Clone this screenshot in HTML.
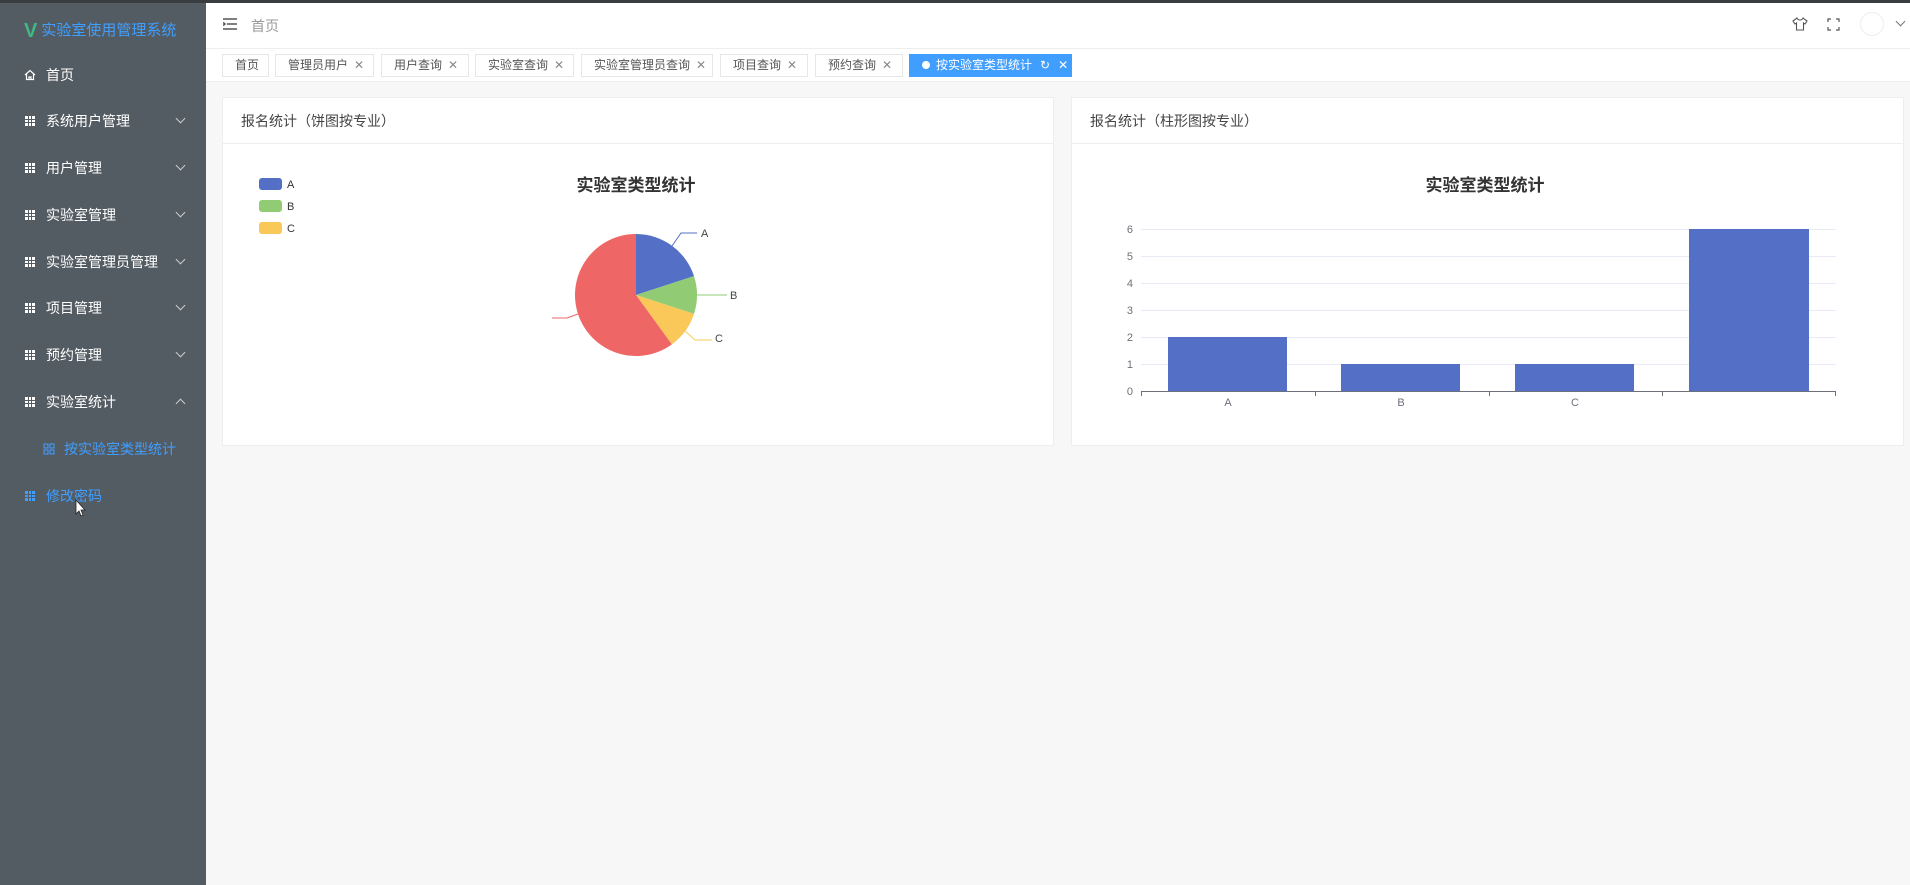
<!DOCTYPE html>
<html><head><meta charset="utf-8"><style>
*{margin:0;padding:0;box-sizing:border-box}
body{width:1910px;height:885px;overflow:hidden;background:#f7f7f7;font-family:"Liberation Sans","Noto Sans CJK SC",sans-serif;position:relative}
.topline{position:absolute;left:0;top:0;width:1910px;height:3px;background:#3a3d40}
.side{position:absolute;left:0;top:3px;width:206px;height:882px;background:#545c63}
.logo{position:absolute;left:24px;top:16px;color:#409eff;font-size:15px}
.logo b{color:#41b883;font-size:20px;font-weight:bold;margin-right:4px;vertical-align:-2px}
.mi{position:absolute;left:0;width:206px;height:20px;color:#fff;font-size:14px;line-height:20px}
.mi .ic{position:absolute;left:25px;top:5px;width:10px;height:10px;background:
linear-gradient(#545c63,#545c63) 3px 0/1px 10px no-repeat,linear-gradient(#545c63,#545c63) 6px 0/1px 10px no-repeat,linear-gradient(#545c63,#545c63) 0 3px/10px 1px no-repeat,linear-gradient(#545c63,#545c63) 0 6px/10px 1px no-repeat,#fff}
.mi .t{position:absolute;left:46px}
.mi .ch{position:absolute;left:177px;top:4px;width:7px;height:7px;border-right:1px solid #ccc;border-bottom:1px solid #ccc;transform:rotate(45deg)}
.mi .up{top:8px;transform:rotate(-135deg)}
.hdr{position:absolute;left:206px;top:3px;width:1704px;height:46px;background:#fff;border-bottom:1px solid #eee}
.tabs{position:absolute;left:206px;top:49px;width:1704px;height:33px;background:#fff;border-bottom:1px solid #eee}
.tab{position:absolute;top:5px;height:23px;border:1px solid #e6e6e6;background:#fff;font-size:12px;color:#555;line-height:21px;padding-left:12px}
.tab i{font-style:normal;color:#888;margin-left:6px}
.card{position:absolute;top:97px;height:349px;background:#fff;border:1px solid #eeeeee}
.card .h{height:46px;border-bottom:1px solid #eee;font-size:14px;color:#444;line-height:46px;padding-left:18px}
</style></head><body>
<div class="topline"></div>
<div class="side">
<div class="logo"><b>V</b>实验室使用管理系统</div>
</div>
<div class="mi" style="top:65px"><svg style="position:absolute;left:24px;top:4px" width="12" height="12" viewBox="0 0 12 12"><path d="M1 6L6 1.5 11 6M2.5 5v5.5h7V5M5 10.5V8h2v2.5" fill="none" stroke="#fff" stroke-width="1.2"/></svg><span class="t">首页</span></div>
<div class="mi" style="top:111px"><span class="ic"></span><span class="t">系统用户管理</span><span class="ch"></span></div>
<div class="mi" style="top:158px"><span class="ic"></span><span class="t">用户管理</span><span class="ch"></span></div>
<div class="mi" style="top:205px"><span class="ic"></span><span class="t">实验室管理</span><span class="ch"></span></div>
<div class="mi" style="top:252px"><span class="ic"></span><span class="t">实验室管理员管理</span><span class="ch"></span></div>
<div class="mi" style="top:298px"><span class="ic"></span><span class="t">项目管理</span><span class="ch"></span></div>
<div class="mi" style="top:345px"><span class="ic"></span><span class="t">预约管理</span><span class="ch"></span></div>
<div class="mi" style="top:392px"><span class="ic"></span><span class="t">实验室统计</span><span class="ch up"></span></div>
<div class="mi" style="top:439px;color:#409eff"><svg style="position:absolute;left:43px;top:4px" width="12" height="12" viewBox="0 0 12 12"><g fill="none" stroke="#409eff"><rect x="1" y="1" width="4" height="4"/><rect x="7" y="1" width="4" height="4"/><rect x="1" y="7" width="4" height="4"/><rect x="7" y="7" width="4" height="4"/></g></svg><span class="t" style="left:64px">按实验室类型统计</span></div>
<div class="mi" style="top:486px;color:#409eff"><span class="ic" style="background:linear-gradient(#545c63,#545c63) 3px 0/1px 10px no-repeat,linear-gradient(#545c63,#545c63) 6px 0/1px 10px no-repeat,linear-gradient(#545c63,#545c63) 0 3px/10px 1px no-repeat,linear-gradient(#545c63,#545c63) 0 6px/10px 1px no-repeat,#409eff"></span><span class="t">修改密码</span></div>

<div class="hdr">
<svg style="position:absolute;left:17px;top:15px" width="14" height="12" viewBox="0 0 14 12"><path d="M0 1h14M4 6h10M0 11h14M0 4.5l2 1.5-2 1.5" stroke="#555" stroke-width="1.5" fill="none"/></svg>
<span style="position:absolute;left:45px;top:13px;font-size:14px;color:#999">首页</span>
<svg style="position:absolute;left:1586px;top:14px" width="16" height="14" viewBox="0 0 16 14"><path d="M5 1L1 4l2 3 1.5-1V13h7V6L13 7l2-3-4-3c-.5 1.5-1.5 2-3 2S5.5 2.5 5 1z" fill="none" stroke="#555" stroke-width="1.1"/></svg>
<svg style="position:absolute;left:1621px;top:15px" width="13" height="13" viewBox="0 0 13 13"><path d="M1 4V1h3M9 1h3v3M12 9v3H9M4 12H1V9" fill="none" stroke="#555" stroke-width="1.2"/></svg>
<div style="position:absolute;left:1654px;top:9px;width:24px;height:24px;border-radius:50%;border:1px solid #eee"></div>
<div style="position:absolute;left:1691px;top:15px;width:7px;height:7px;border-right:1px solid #777;border-bottom:1px solid #777;transform:rotate(45deg)"></div>
</div>
<div class="tabs">
<div class="tab" style="left:16px;width:47px">首页</div>
<div class="tab" style="left:69px;width:99px">管理员用户<i>✕</i></div>
<div class="tab" style="left:175px;width:88px">用户查询<i>✕</i></div>
<div class="tab" style="left:269px;width:99px">实验室查询<i>✕</i></div>
<div class="tab" style="left:375px;width:132px">实验室管理员查询<i>✕</i></div>
<div class="tab" style="left:514px;width:88px">项目查询<i>✕</i></div>
<div class="tab" style="left:609px;width:88px">预约查询<i>✕</i></div>
<div class="tab" style="left:703px;width:163px;background:#409eff;border-color:#409eff;color:#fff;padding-left:12px"><span style="display:inline-block;width:8px;height:8px;border-radius:50%;background:#fff;margin-right:6px;vertical-align:0"></span>按实验室类型统计<i style="color:#fff;margin-left:8px">↻</i><i style="color:#fff;margin-left:8px">✕</i></div>
</div>

<div class="card" style="left:222px;width:832px"><div class="h">报名统计（饼图按专业）</div></div>
<div class="card" style="left:1071px;width:833px"><div class="h">报名统计（柱形图按专业）</div></div>

<svg style="position:absolute;left:0;top:0" width="1910" height="885">
<g font-family="Liberation Sans, Noto Sans CJK SC, sans-serif">
<text x="636" y="191" font-size="17" font-weight="bold" fill="#333" text-anchor="middle">实验室类型统计</text>
<rect x="259" y="178" width="23" height="12" rx="3" fill="#5470c6"/><text x="287" y="188" font-size="11" fill="#333">A</text>
<rect x="259" y="200" width="23" height="12" rx="3" fill="#91cc75"/><text x="287" y="210" font-size="11" fill="#333">B</text>
<rect x="259" y="222" width="23" height="12" rx="3" fill="#fac858"/><text x="287" y="232" font-size="11" fill="#333">C</text>
<path d="M636 295L636 234A61 61 0 0 1 694 276.15Z" fill="#5470c6"/>
<path d="M636 295L694 276.15A61 61 0 0 1 694 313.85Z" fill="#91cc75"/>
<path d="M636 295L694 313.85A61 61 0 0 1 671.85 344.35Z" fill="#fac858"/>
<path d="M636 295L671.85 344.35A61 61 0 1 1 636 234Z" fill="#ee6666"/>
<path d="M672 246L681 233H697" stroke="#5470c6" fill="none"/>
<path d="M697 295H727" stroke="#91cc75" fill="none"/>
<path d="M685 331L695 340H712" stroke="#fac858" fill="none"/>
<path d="M578 314L567 318H552" stroke="#ee6666" fill="none"/>
<text x="701" y="237" font-size="11" fill="#444">A</text>
<text x="730" y="299" font-size="11" fill="#444">B</text>
<text x="715" y="342" font-size="11" fill="#444">C</text>

<text x="1485" y="191" font-size="17" font-weight="bold" fill="#333" text-anchor="middle">实验室类型统计</text>
<g stroke="#e6ebf5" stroke-width="1">
<line x1="1141" y1="229.5" x2="1836" y2="229.5"/><line x1="1141" y1="256.5" x2="1836" y2="256.5"/><line x1="1141" y1="283.5" x2="1836" y2="283.5"/><line x1="1141" y1="310.5" x2="1836" y2="310.5"/><line x1="1141" y1="337.5" x2="1836" y2="337.5"/><line x1="1141" y1="364.5" x2="1836" y2="364.5"/>
</g>
<g fill="#5470c6">
<rect x="1168" y="337" width="119" height="54"/><rect x="1341" y="364" width="119" height="27"/><rect x="1515" y="364" width="119" height="27"/><rect x="1689" y="229" width="120" height="162"/>
</g>
<g stroke="#6e7079"><line x1="1141" y1="391.5" x2="1836" y2="391.5"/>
<line x1="1141.5" y1="391" x2="1141.5" y2="396"/><line x1="1315.5" y1="391" x2="1315.5" y2="396"/><line x1="1489.5" y1="391" x2="1489.5" y2="396"/><line x1="1662.5" y1="391" x2="1662.5" y2="396"/><line x1="1835.5" y1="391" x2="1835.5" y2="396"/></g>
<g font-size="11" fill="#6e7079" text-anchor="end">
<text x="1133" y="233">6</text><text x="1133" y="260">5</text><text x="1133" y="287">4</text><text x="1133" y="314">3</text><text x="1133" y="341">2</text><text x="1133" y="368">1</text><text x="1133" y="395">0</text>
</g>
<g font-size="11" fill="#6e7079" text-anchor="middle"><text x="1228" y="406">A</text><text x="1401" y="406">B</text><text x="1575" y="406">C</text></g>
</g>
<path d="M76 500v14l3-3 2 5 2-1-2-5h4z" fill="#fff" stroke="#222" stroke-width="0.8"/>
</svg>
</body></html>
